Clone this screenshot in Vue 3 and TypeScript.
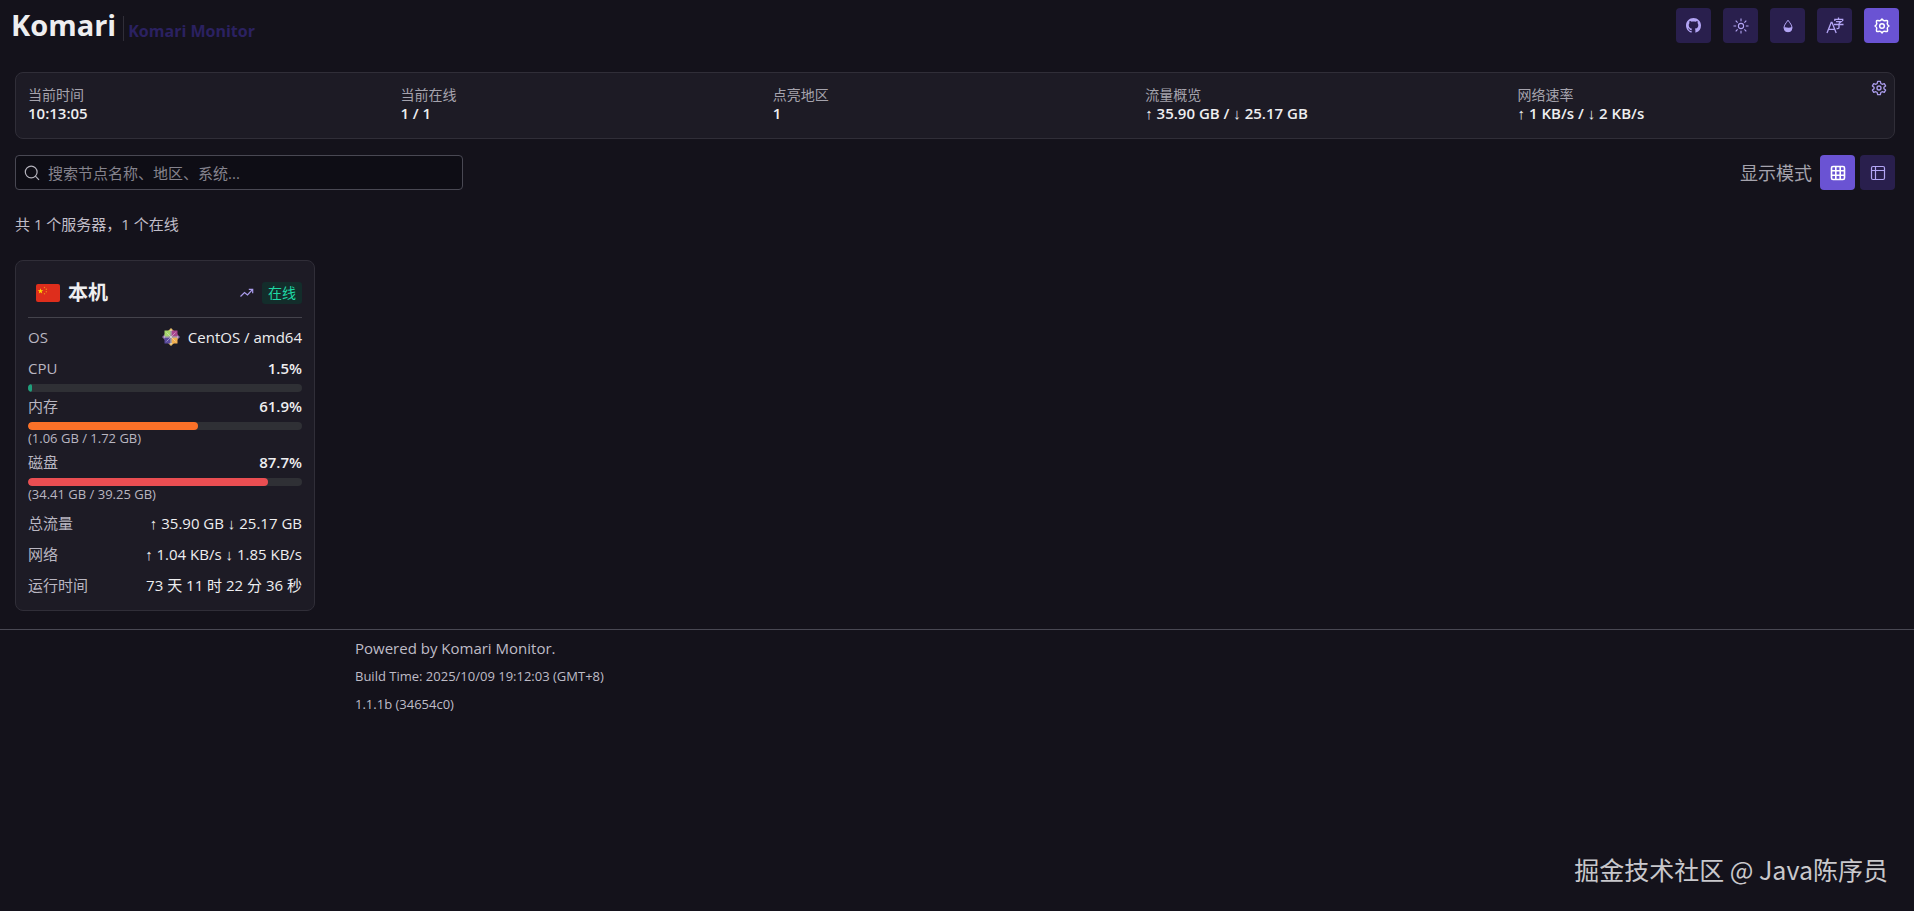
<script setup lang="ts">
import { ref } from 'vue'

interface Stat { label: string; value: string }
interface Row { label: string; value: string }
interface Usage { id: string; label: string; percent: number; detail?: string; tone: string }

const search = ref('')
const mode = ref<'grid' | 'table'>('grid')

const stats: Stat[] = [
  { label: '当前时间', value: '10:13:05' },
  { label: '当前在线', value: '1 / 1' },
  { label: '点亮地区', value: '1' },
  { label: '流量概览', value: '↑ 35.90 GB / ↓ 25.17 GB' },
  { label: '网络速率', value: '↑ 1 KB/s / ↓ 2 KB/s' },
]

const usages: Usage[] = [
  { id: 'cpu', label: 'CPU', percent: 1.5, tone: 'green' },
  { id: 'mem', label: '内存', percent: 61.9, detail: '(1.06 GB / 1.72 GB)', tone: 'orange' },
  { id: 'disk', label: '磁盘', percent: 87.7, detail: '(34.41 GB / 39.25 GB)', tone: 'red' },
]

const rows: Row[] = [
  { label: '总流量', value: '↑ 35.90 GB ↓ 25.17 GB' },
  { label: '网络', value: '↑ 1.04 KB/s ↓ 1.85 KB/s' },
  { label: '运行时间', value: '73 天 11 时 22 分 36 秒' },
]
</script>

<template>
  <div class="page">
    <header class="topbar">
      <div class="brand">
        <h1>Komari</h1>
        <span class="tagline">Komari Monitor</span>
      </div>
      <nav class="actions" aria-label="工具">
        <button type="button" class="icon-btn" aria-label="GitHub">
          <svg width="15" height="15" viewBox="0 0 16 16" fill="currentColor"><path d="M8 0C3.58 0 0 3.58 0 8c0 3.54 2.29 6.53 5.47 7.59.4.07.55-.17.55-.38 0-.19-.01-.82-.01-1.49-2.01.37-2.53-.49-2.69-.94-.09-.23-.48-.94-.82-1.13-.28-.15-.68-.52-.01-.53.63-.01 1.08.58 1.23.82.72 1.21 1.87.87 2.33.66.07-.52.28-.87.51-1.07-1.78-.2-3.64-.89-3.64-3.95 0-.87.31-1.59.82-2.15-.08-.2-.36-1.02.08-2.12 0 0 .67-.21 2.2.82.64-.18 1.32-.27 2-.27s1.36.09 2 .27c1.53-1.04 2.2-.82 2.2-.82.44 1.1.16 1.92.08 2.12.51.56.82 1.27.82 2.15 0 3.07-1.87 3.75-3.65 3.95.29.25.54.73.54 1.48 0 1.07-.01 1.93-.01 2.2 0 .21.15.46.55.38A8.01 8.01 0 0 0 16 8c0-4.42-3.58-8-8-8z" /></svg>
        </button>
        <button type="button" class="icon-btn" aria-label="主题">
          <svg width="16" height="16" viewBox="0 0 16 16" fill="none" stroke="currentColor" stroke-width="1.1"><circle cx="8" cy="8" r="2.6" /><path d="M8 .5v2.7M8 12.8v2.7M.5 8h2.7M12.8 8h2.7M2.7 2.7l1.9 1.9M11.4 11.4l1.9 1.9M2.7 13.3l1.9-1.9M11.4 4.6l1.9-1.9" /></svg>
        </button>
        <button type="button" class="icon-btn" aria-label="配色">
          <svg width="16" height="16" viewBox="0 0 16 16"><path d="M8 2.2C6 5 4 7.2 4 9.8a4 4 0 0 0 8 0C12 7.2 10 5 8 2.2z" fill="none" stroke="currentColor" /><path d="M4 9.6C6 8.600 8 10.8 12 9a4 4 0 0 1-4 5 4 4 0 0 1-4-4.4z" fill="currentColor" /></svg>
        </button>
        <button type="button" class="icon-btn" aria-label="语言">
          <svg width="18" height="18" viewBox="0 0 18 18" fill="none" stroke="currentColor" stroke-width="1.3"><path d="M1 16 5.200 5.500h.8l4.200 10.500M2.500 12.400h6.200" /><path d="M12.500.5v1.800M8.800 4V2.300h7.900V4M10 4.600h5.200l-2.300 2M8 7.500h9.500M13 6.500v4.300q0 1-2.400.7" /></svg>
        </button>
        <button type="button" class="icon-btn solid" aria-label="管理">
          <svg width="16" height="16" viewBox="0 0 24 24" fill="none" stroke="currentColor" stroke-width="2.200" stroke-linejoin="round"><path d="M12 1.500Q14 4.600 16 4q3-.7 4 0 .7 1 0 4-.6 2 2.500 4-3.100 2-2.500 4 .7 3 0 4-1 .7-4 0-2-.6-4 2.500-2-3.100-4-2.500-3 .7-4 0-.7-1 0-4 .6-2-2.500-4Q4.600 10 4 8q-.7-3 0-4 1-.7 4 0 2 .6 4-2.500z" /><circle cx="12" cy="12" r="3.500" /></svg>
        </button>
      </nav>
    </header>

    <main>
      <section class="stats">
        <dl>
          <div v-for="s in stats" :key="s.label">
            <dt>{{ s.label }}</dt>
            <dd>{{ s.value }}</dd>
          </div>
        </dl>
        <button type="button" class="config" aria-label="设置">
          <svg width="16" height="16" viewBox="0 0 24 24" fill="none" stroke="currentColor" stroke-width="2" stroke-linejoin="round"><path d="M10 2h4l.7 3.200 2 1.200 3.200-1 2 3.500-2.500 2.100v2l2.500 2.100-2 3.500-3.200-1-2 1.200L14 22h-4l-.7-3.200-2-1.200-3.200 1-2-3.500L4.600 13v-2L2.100 8.900l2-3.500 3.200 1 2-1.200z" /><circle cx="12" cy="12" r="3" /></svg>
        </button>
      </section>

      <div class="toolbar">
        <label class="search">
          <svg width="16" height="16" viewBox="0 0 16 16" fill="none" stroke="currentColor" stroke-width="1.200"><circle cx="7.200" cy="7" r="5.900" /><path d="m11.400 11.200 3.600 3.600" /></svg>
          <input v-model="search" type="text" aria-label="搜索" placeholder="搜索节点名称、地区、系统..." />
        </label>
        <div class="modes">
          <span>显示模式</span>
          <button type="button" class="icon-btn" :class="{ solid: mode === 'grid' }" aria-label="网格" @click="mode = 'grid'">
            <svg width="16" height="16" viewBox="0 0 16 16" fill="none" stroke="currentColor" stroke-width="1.600"><rect x="1.500" y="1.500" width="13" height="13" rx="1.500" /><path d="M5.800 1.500v13M10.200 1.500v13M1.500 5.800h13M1.500 10.200h13" /></svg>
          </button>
          <button type="button" class="icon-btn" :class="{ solid: mode === 'table' }" aria-label="表格" @click="mode = 'table'">
            <svg width="16" height="16" viewBox="0 0 16 16" fill="none" stroke="currentColor" stroke-width="1.200"><rect x="1.500" y="1.500" width="13" height="13" rx="1.500" /><path d="M5.500 1.500v13M1.500 5.500h13" /></svg>
          </button>
        </div>
      </div>

      <p class="summary">共 1 个服务器，1 个在线</p>

      <div class="nodes">
        <article class="node">
          <div class="node-head">
            <svg width="24" height="18" viewBox="0 0 24 18"><rect width="24" height="18" rx="2" fill="#de2e1c" /><path d="M4.500 4.200l.7 2h2.100L5.600 7.400l.6 2-1.700-1.200-1.700 1.200.6-2L1.700 6.200h2.100z" fill="#ffde00" /><g fill="#f08a1c"><circle cx="8.500" cy="3.500" r=".7" /><circle cx="10.300" cy="5.300" r=".7" /><circle cx="10.300" cy="7.800" r=".7" /><circle cx="8.500" cy="9.800" r=".7" /></g></svg>
            <h2>本机</h2>
            <svg class="trend" width="16" height="16" viewBox="0 0 16 16" fill="none" stroke="currentColor" stroke-width="1.200"><path d="M1.500 11.500 5.500 7.500l3 2.500 5-5.500M9.800 4.300h3.900v3.900" /></svg>
            <span class="badge">在线</span>
          </div>
          <div class="row">
            <span class="name">OS</span>
            <span class="os">
              <svg width="18" height="18" viewBox="0 0 18 18"><path d="M9 0l3 3H6zM9 18l-3-3h6z" fill="#e5bd6a" /><path d="M0 9l3-3v6zM18 9l-3 3V6z" fill="#8f6fa8" /><path d="M2.500 2.500h6v6h-6z" fill="#a6d66a" /><path d="M9.500 2.500h6v6h-6z" fill="#a8458f" /><path d="M2.500 9.500h6v6h-6z" fill="#5a4a9c" /><path d="M9.500 9.500h6v6h-6z" fill="#f2b04e" /><path d="M9 2v14M2 9h14" stroke="#e6dfe8" /><path d="M4.500 4.500l9 9M13.500 4.500l-9 9" stroke="#e6dfe8" stroke-width=".5" /></svg>
              CentOS / amd64
            </span>
          </div>
          <div v-for="u in usages" :key="u.id" class="usage">
            <div class="usage-line">
              <span class="name">{{ u.label }}</span>
              <strong>{{ u.percent }}%</strong>
            </div>
            <div class="track"><div class="fill" :class="u.tone" :style="{ width: u.percent + '%' }"></div></div>
            <small v-if="u.detail">{{ u.detail }}</small>
          </div>
          <div class="totals">
            <div v-for="r in rows" :key="r.label" class="row">
              <span class="name">{{ r.label }}</span>
              <span>{{ r.value }}</span>
            </div>
          </div>
        </article>
      </div>
    </main>

    <footer>
      <div class="foot">
        <p class="powered">Powered by <a href="#">Komari Monitor.</a></p>
        <p>Build Time: 2025/10/09 19:12:03 (GMT+8)</p>
        <p>1.1.1b (34654c0)</p>
      </div>
    </footer>

    <div class="watermark">掘金技术社区 @ Java陈序员</div>
  </div>
</template>

<style>
body {
  background: #14121b;
}
</style>

<style scoped>
.page {
  min-height: 100vh;
  padding-right: 4px;
  box-sizing: border-box;
  position: relative;
  background: #14121b;
  color: #eeeef0;
  font-family: "Open Sans", "Liberation Sans", "Noto Sans CJK SC", sans-serif;
  font-size: 15px;
  line-height: 24px;
}
h1, h2, p, dl, dd { margin: 0; }
button { font: inherit; border: 0; padding: 0; cursor: pointer; }
svg { display: block; flex: none; }
.topbar {
  display: flex;
  justify-content: space-between;
  align-items: center;
  height: 51px;
  padding: 0 11px;
}
.brand { display: flex; align-items: center; }
h1 { padding-bottom: 2px; font-size: 29px; line-height: 48px; font-weight: 700; }
.tagline {
  margin: 6px 0 0 7px;
  padding: 5px 0 0 4px;
  border-left: 1px solid #302e38;
  color: #2b2161;
  font-size: 16px;
  line-height: 20px;
  font-weight: 700;
}
.actions { display: flex; gap: 12px; }
.icon-btn {
  width: 35px;
  height: 35px;
  display: flex;
  align-items: center;
  justify-content: center;
  border-radius: 4px;
  background: #291f4d;
  color: #b3a5f5;
}
.icon-btn.solid { background: #6a53d3; color: #fff; }
main { padding: 21px 15px 18px; }
.stats {
  position: relative;
  padding: 12px;
  border: 1px solid #302e38;
  border-radius: 8px;
  background: #1d1b25;
}
.stats dl {
  display: grid;
  grid-template-columns: repeat(5, 1fr);
  gap: 8px;
  padding: 1px 0 4px;
}
dt { font-size: 14px; line-height: 18px; color: #a5a3ad; }
dd { font-size: 15px; line-height: 18px; font-weight: 600; }
.config {
  position: absolute;
  top: 7px;
  right: 7px;
  background: none;
  color: #a99bea;
}
.toolbar { display: flex; justify-content: space-between; margin-top: 16px; }
.search {
  flex: 0 1 448px;
  box-sizing: border-box;
  height: 35px;
  display: flex;
  align-items: center;
  gap: 8px;
  padding: 0 8px;
  border: 1px solid #494853;
  border-radius: 4px;
  background: #0e0d15;
  color: #b5b3bd;
}
.search input {
  flex: 1;
  min-width: 0;
  border: 0;
  padding: 0;
  outline: 0;
  background: none;
  color: #eeeef0;
  font: inherit;
}
.search input::placeholder { color: #85838d; opacity: 1; }
.modes { display: flex; align-items: center; gap: 5px; }
.modes span { font-size: 18px; color: #a5a3ad; margin-right: 3px; }
.summary { margin-top: 22px; color: #c0bdc8; }
.nodes {
  display: grid;
  grid-template-columns: repeat(auto-fill, minmax(300px, 1fr));
  margin-top: 24px;
}
.node {
  box-sizing: border-box;
  width: 300px;
  padding: 8px 12px 10px;
  border: 1px solid #302e38;
  border-radius: 8px;
  background: #1d1b25;
}
.node-head {
  display: flex;
  align-items: center;
  height: 48px;
  padding-left: 8px;
  border-bottom: 1px solid #44434c;
}
h2 { flex: 1; margin-left: 8px; font-size: 20px; font-weight: 700; }
.trend { color: #a99bea; margin-right: 7px; }
.badge {
  padding: 0 6px;
  border-radius: 3px;
  background: #132d2b;
  color: #1fd8a4;
  font-size: 14px;
  line-height: 22px;
}
.row { display: flex; justify-content: space-between; align-items: center; height: 31px; }
.node-head + .row { height: 38px; }
.os { display: flex; align-items: center; gap: 8px; }
.name { color: #b9b6c1; }
.usage-line { display: flex; justify-content: space-between; line-height: 24px; }
.usage-line strong { font-weight: 600; }
.usage { padding-bottom: 2px; }
.track { margin-top: 4px; height: 8px; border-radius: 4px; background: #2f3035; overflow: hidden; }
.fill { height: 100%; border-radius: 4px; }
.green { background: #1f9f7c; }
.orange { background: #fb7128; }
.red { background: #ea4e52; }
small { display: block; padding-bottom: 2px; font-size: 13px; line-height: 16px; color: #b9b6c1; }
.totals { padding-top: 1px; }
footer { border-top: 1px solid #494853; margin-right: -4px; padding-right: 4px; }
.foot { max-width: 1200px; margin: 0 auto; padding-top: 5px; color: #bfbcc7; }
.foot p { font-size: 13px; line-height: 28px; }
.foot .powered { font-size: 15px; line-height: 27px; }
.foot a { color: inherit; text-decoration: none; }
.watermark {
  position: absolute;
  right: 26px;
  bottom: 23px;
  color: #c9c8cc;
  font-family: "Noto Sans CJK SC", sans-serif;
  font-size: 25px;
  line-height: 38px;
}
</style>
